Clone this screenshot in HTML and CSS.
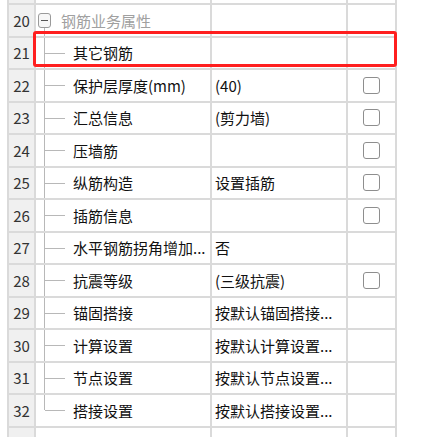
FILE: index.html
```html
<!DOCTYPE html>
<html lang="zh">
<head>
<meta charset="utf-8">
<title>钢筋业务属性</title>
<link rel="stylesheet" href="styles.css">
</head>
<body>
<div class="sheet">
  <div class="row stub-top"><div class="num"></div><div class="name"></div><div class="val"></div><div class="chk"></div></div>
  <div class="table">
    <div class="row"><div class="num">20</div><div class="name group"><span class="toggle"></span><span class="gtext">钢筋业务属性</span></div><div class="val"></div><div class="chk"></div></div>
    <div class="row"><div class="num">21</div><div class="name leaf">其它钢筋</div><div class="val"></div><div class="chk"></div></div>
    <div class="row"><div class="num">22</div><div class="name leaf">保护层厚度(mm)</div><div class="val">(40)</div><div class="chk"><span class="box"></span></div></div>
    <div class="row"><div class="num">23</div><div class="name leaf">汇总信息</div><div class="val">(剪力墙)</div><div class="chk"><span class="box"></span></div></div>
    <div class="row"><div class="num">24</div><div class="name leaf">压墙筋</div><div class="val"></div><div class="chk"><span class="box"></span></div></div>
    <div class="row"><div class="num">25</div><div class="name leaf">纵筋构造</div><div class="val">设置插筋</div><div class="chk"><span class="box"></span></div></div>
    <div class="row"><div class="num">26</div><div class="name leaf">插筋信息</div><div class="val"></div><div class="chk"><span class="box"></span></div></div>
    <div class="row"><div class="num">27</div><div class="name leaf">水平钢筋拐角增加...</div><div class="val">否</div><div class="chk"></div></div>
    <div class="row"><div class="num">28</div><div class="name leaf">抗震等级</div><div class="val">(三级抗震)</div><div class="chk"><span class="box"></span></div></div>
    <div class="row"><div class="num">29</div><div class="name leaf">锚固搭接</div><div class="val">按默认锚固搭接...</div><div class="chk"></div></div>
    <div class="row"><div class="num">30</div><div class="name leaf">计算设置</div><div class="val">按默认计算设置...</div><div class="chk"></div></div>
    <div class="row"><div class="num">31</div><div class="name leaf">节点设置</div><div class="val">按默认节点设置...</div><div class="chk"></div></div>
    <div class="row"><div class="num">32</div><div class="name leaf last">搭接设置</div><div class="val">按默认搭接设置...</div><div class="chk"></div></div>
    <div class="row stub-bottom"><div class="num"></div><div class="name"></div><div class="val"></div><div class="chk"></div></div>
  </div>
  <div class="highlight"></div>
</div>
</body>
</html>
```

FILE: styles.css
```css
html, body {
  margin: 0;
  padding: 0;
  background: #ffffff;
}

body {
  width: 437px;
  height: 437px;
  overflow: hidden;
  font-family: "Noto Sans CJK SC", "Noto Sans", sans-serif;
  font-size: 15px;
  color: #111111;
}

.sheet {
  position: relative;
  margin-left: 7px;
  width: 390px;
  border-left: 2px solid #dadada;
  box-sizing: border-box;
}

.table {
  border-top: 2px solid #dadada;
}

.row {
  display: grid;
  grid-template-columns: 27px 176px 136px 49px;
  height: 32.5px;
  box-sizing: border-box;
  border-bottom: 2px solid #dadada;
}

.row > div {
  box-sizing: border-box;
  border-right: 2px solid #dadada;
  display: flex;
  align-items: center;
  white-space: nowrap;
  overflow: hidden;
}

.stub-top {
  height: 3px;
  border-bottom: none;
}

.stub-bottom {
  height: 12px;
  border-bottom: none;
}

.num {
  background: #f0f0f0;
  justify-content: center;
  color: #333333;
  font-size: 15px;
}

.name {
  position: relative;
  padding-left: 37px;
}

.group {
  padding-left: 2px;
}

.toggle {
  position: relative;
  width: 11px;
  height: 13px;
  border: 1px solid #9a9a9a;
  border-radius: 3px;
  background: #f7f7f7;
  margin-right: 10px;
  flex: none;
}

.toggle::after {
  content: "";
  position: absolute;
  left: 2px;
  right: 2px;
  top: 6px;
  height: 1px;
  background: #555555;
}

.group::after {
  content: "";
  position: absolute;
  left: 8px;
  top: 23px;
  bottom: 0;
  width: 1px;
  background: #b8b8b8;
}

.gtext {
  color: #a0a0a0;
}

.leaf::before {
  content: "";
  position: absolute;
  left: 8px;
  top: 0;
  bottom: 0;
  width: 1px;
  background: #b8b8b8;
}

.leaf.last::before {
  bottom: 50%;
}

.leaf::after {
  content: "";
  position: absolute;
  left: 9px;
  width: 20px;
  top: 50%;
  height: 1px;
  background: #b8b8b8;
}

.val {
  padding-left: 3px;
}

.chk {
  justify-content: center;
  padding-right: 1px;
}

.box {
  width: 17px;
  height: 17px;
  box-sizing: border-box;
  border: 1.5px solid #8e8e8e;
  border-radius: 3px;
  background: #ffffff;
}

.highlight {
  position: absolute;
  left: 24px;
  top: 31px;
  width: 364px;
  height: 36px;
  box-sizing: border-box;
  border: 3px solid #ff1f1f;
  border-radius: 3px;
}
```
